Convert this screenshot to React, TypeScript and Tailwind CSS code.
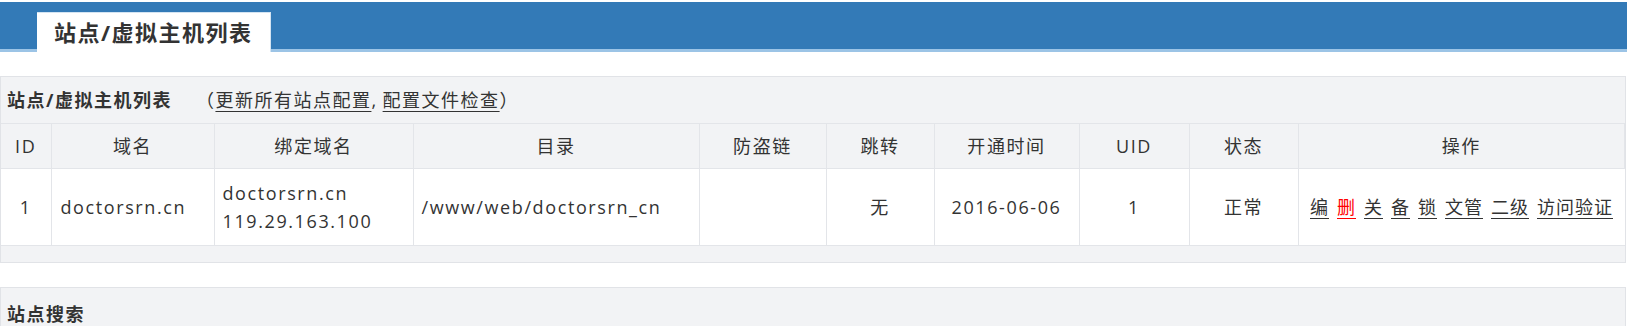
const columns = [
  { name: "ID", width: "w-[50px]" },
  { name: "域名", width: "w-[163px]" },
  { name: "绑定域名", width: "w-[199px]" },
  { name: "目录", width: "w-[286px]" },
  { name: "防盗链", width: "w-[127px]" },
  { name: "跳转", width: "w-[108px]" },
  { name: "开通时间", width: "w-[145px]" },
  { name: "UID", width: "w-[110px]" },
  { name: "状态", width: "w-[109px]" },
  { name: "操作", width: "" },
];

const actions = [
  { label: "编", red: false },
  { label: "删", red: true },
  { label: "关", red: false },
  { label: "备", red: false },
  { label: "锁", red: false },
  { label: "文管", red: false },
  { label: "二级", red: false },
  { label: "访问验证", red: false },
];

const cell = "border border-[#e3e5e9] h-[77px] py-0 leading-[28px]";

const App = () => {
  return (
    <div
      className="w-[1627px] pt-[2px] text-[18px] text-[#333] tracking-[1.6px]"
      style={{ fontFamily: '"Open Sans", "Noto Sans CJK SC", sans-serif' }}
    >
      <div className="h-[50px] bg-[#337ab7] border-b-[3px] border-[#9cc4e6] flex items-end pl-[37px]">
        <div className="h-[40px] -mb-[3px] w-[234px] bg-white border-t border-r border-[#d4e4f2] flex items-center pl-[17px] text-[22px] font-bold tracking-[1.5px]">
          站点/虚拟主机列表
        </div>
      </div>

      <div className="mt-[24px] w-[1626px] bg-[#f2f3f5] border border-[#e1e3e7] pb-[16px]">
        <div className="h-[46px] flex items-center pl-[6px] tracking-[1.5px]">
          <span className="font-bold">站点/虚拟主机列表</span>
          <span className="ml-[24px]">（ </span>
          <a className="underline underline-offset-[4px] decoration-1">更新所有站点配置</a>
          <span>, </span>
          <a className="ml-[5px] underline underline-offset-[4px] decoration-1">配置文件检查</a>
          <span> ）</span>
        </div>
        <table className="w-full table-fixed border-collapse">
          <colgroup>
            {columns.map(({ name, width }) => (
              <col key={name} className={width} />
            ))}
          </colgroup>
          <thead>
            <tr>
              {columns.map(({ name }) => (
                <th
                  key={name}
                  className="border border-[#e3e5e9] border-l-0 h-[45px] p-0 leading-[28px] font-normal text-center"
                >
                  {name}
                </th>
              ))}
            </tr>
          </thead>
          <tbody className="bg-white">
            <tr>
              <td className={`${cell} text-center border-l-0`}>1</td>
              <td className={`${cell} pl-[9px]`}>doctorsrn.cn</td>
              <td className={`${cell} pl-[8px]`}>
                doctorsrn.cn
                <br />
                119.29.163.100
              </td>
              <td className={`${cell} pl-[8px]`}>/www/web/doctorsrn_cn</td>
              <td className={cell}></td>
              <td className={`${cell} text-center`}>无</td>
              <td className={`${cell} text-center`}>2016-06-06</td>
              <td className={`${cell} text-center`}>1</td>
              <td className={`${cell} text-center`}>正常</td>
              <td className={`${cell} text-center border-r-0 whitespace-nowrap tracking-[1px]`}>
                {actions.map(({ label, red }) => (
                  <a
                    key={label}
                    className={`mx-[4px] underline underline-offset-[4px] decoration-1 ${
                      red ? "text-[#ff0000]" : ""
                    }`}
                  >
                    {label}
                  </a>
                ))}
              </td>
            </tr>
          </tbody>
        </table>
      </div>

      <div className="mt-[24px] w-[1626px] bg-[#f2f3f5] border border-[#e1e3e7]">
        <div className="h-[52px] flex items-center pl-[6px] font-bold tracking-[1.5px]">站点搜索</div>
      </div>
    </div>
  );
};

export default App;
